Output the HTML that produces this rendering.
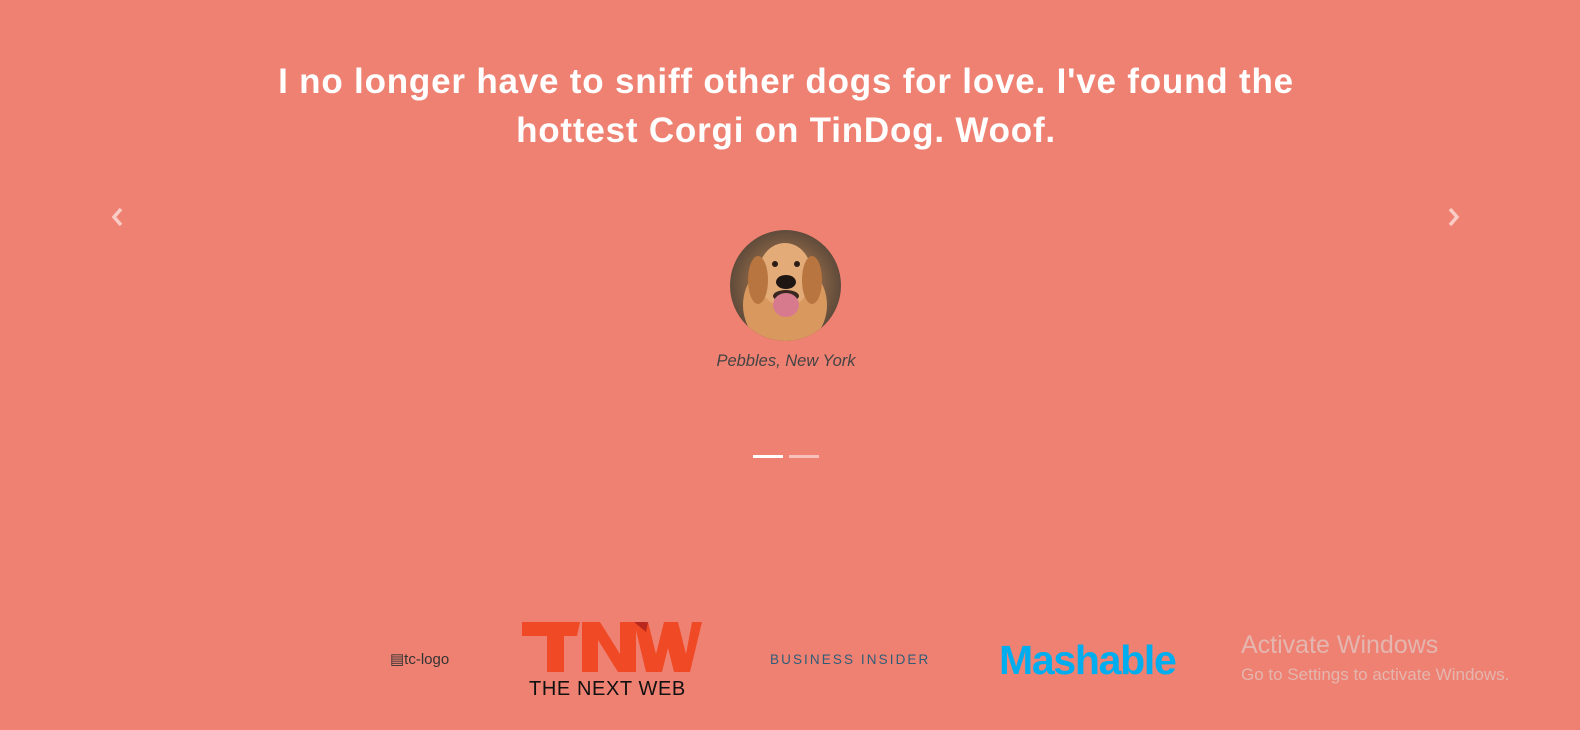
<!DOCTYPE html>
<html><head><meta charset="utf-8"><style>
html,body{margin:0;padding:0;width:1580px;height:730px;overflow:hidden;background:#ef8172;font-family:"Liberation Sans",sans-serif;}
.q{position:absolute;left:0;width:1572px;top:57px;text-align:center;color:#fff;font-weight:900;font-size:35px;letter-spacing:0.8px;line-height:49px;}
.arrow{position:absolute;top:206px;}
.cap{position:absolute;left:0;width:1572px;top:352px;text-align:center;color:#444;font-style:italic;font-size:16.5px;}
.ind{position:absolute;top:455px;height:3px;width:30px;background:#fff;}
</style></head><body>
<div class="q">I no longer have to sniff other dogs for love. I've found the<br>hottest Corgi on TinDog. Woof.</div>
<svg class="arrow" style="left:110px" width="16" height="22" viewBox="0 0 16 22"><path d="M11 3 L4 11 L11 19" stroke="rgba(255,255,255,.6)" stroke-width="3.5" fill="none"/></svg>
<svg class="arrow" style="left:1445px" width="16" height="22" viewBox="0 0 16 22"><path d="M5 3 L12 11 L5 19" stroke="rgba(255,255,255,.6)" stroke-width="3.5" fill="none"/></svg>
<svg style="position:absolute;left:730px;top:230px" width="111" height="111" viewBox="0 0 111 111">
<defs><clipPath id="c"><circle cx="55.5" cy="55.5" r="55.5"/></clipPath>
<radialGradient id="g" cx=".5" cy=".5" r=".6"><stop offset="0" stop-color="#c98a55"/><stop offset="1" stop-color="#4a3e35"/></radialGradient></defs>
<g clip-path="url(#c)">
<rect width="111" height="111" fill="url(#g)"/>
<ellipse cx="55" cy="75" rx="42" ry="45" fill="#d9995e"/>
<ellipse cx="55" cy="45" rx="27" ry="32" fill="#e3ab78"/>
<ellipse cx="28" cy="50" rx="10" ry="24" fill="#b9753f"/>
<ellipse cx="82" cy="50" rx="10" ry="24" fill="#b9753f"/>
<circle cx="45" cy="34" r="3" fill="#2a1d15"/><circle cx="67" cy="34" r="3" fill="#2a1d15"/>
<ellipse cx="56" cy="52" rx="10" ry="7" fill="#1d1613"/>
<ellipse cx="56" cy="66" rx="13" ry="6" fill="#3a2620"/>
<ellipse cx="56" cy="75" rx="13" ry="12" fill="#d77a8e"/>
</g></svg>
<div class="cap">Pebbles, New York</div>
<div class="ind" style="left:753px"></div>
<div class="ind" style="left:789px;background:rgba(255,255,255,.5)"></div>
<div style="position:absolute;left:390px;top:650px;font-size:15px;color:#333;">&#9636;tc-logo</div>
<div style="position:absolute;left:522px;top:622px;width:180px;height:50px;">
<svg width="180" height="50" viewBox="0 0 180 50"><path d="M0 0 H58 L55 14 H42 V50 H25 V14 H0 Z" fill="#f04925"/><path d="M60 0 H78 L98 32 V0 H114 V50 H96 L76 18 V50 H60 Z" fill="#f04925"/><path d="M112 0 H126 L134 32 L142 0 H156 L164 32 L170 0 H180 L168 50 H152 L146 26 L140 50 H124 Z" fill="#f04925"/><path d="M112 0 H126 L124 10 Z" fill="#b8281e"/></svg></div>
<div style="position:absolute;left:529px;top:678px;font-size:20px;color:#111;letter-spacing:0.6px">THE NEXT WEB</div>
<div style="position:absolute;left:770px;top:652px;font-size:13.5px;color:#2f5d78;letter-spacing:2.1px">BUSINESS INSIDER</div>
<div style="position:absolute;left:999px;top:637px;font-size:41px;font-weight:bold;color:#00aeef;letter-spacing:-1.3px">Mashable</div>
<div style="position:absolute;left:1241px;top:631px;font-size:25px;color:rgba(225,195,190,.8)">Activate Windows</div>
<div style="position:absolute;left:1241px;top:665px;font-size:17px;color:rgba(225,195,190,.8)">Go to Settings to activate Windows.</div>
</body></html>
